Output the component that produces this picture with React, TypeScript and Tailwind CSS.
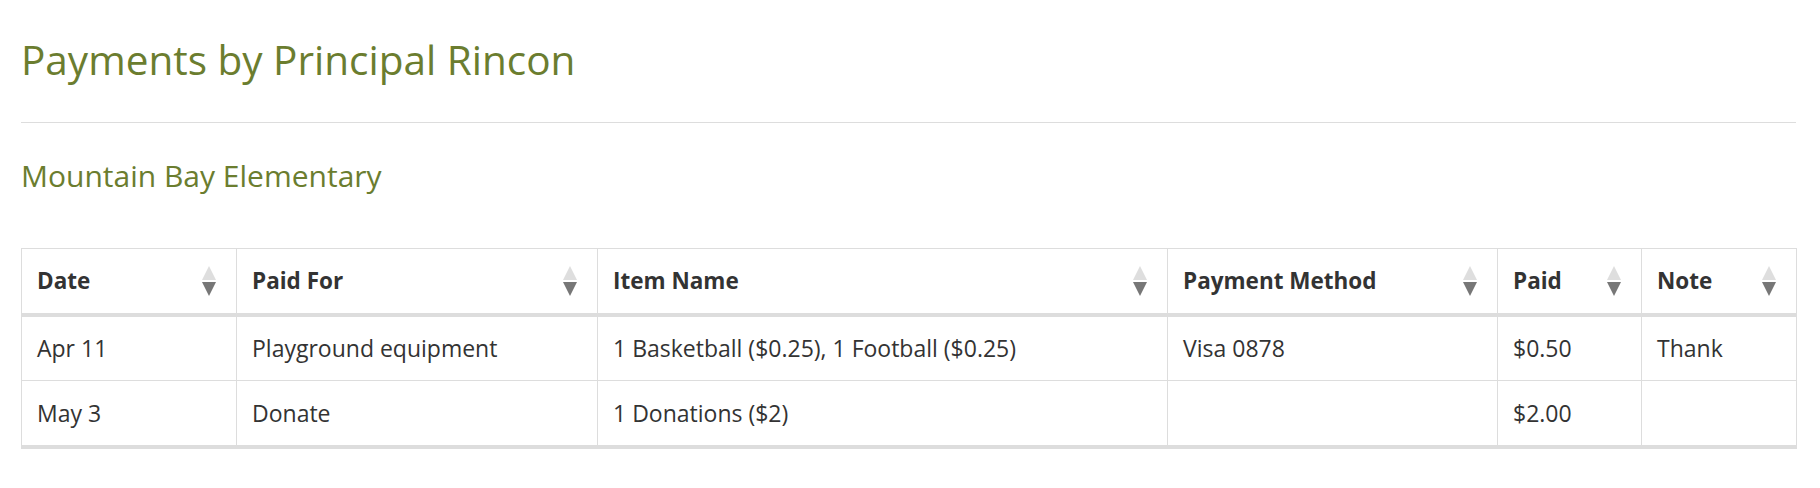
const cols = [
  { label: "Date", width: "w-[215px]" },
  { label: "Paid For", width: "w-[361px]" },
  { label: "Item Name", width: "w-[570px]" },
  { label: "Payment Method", width: "w-[330px]" },
  { label: "Paid", width: "w-[144px]" },
  { label: "Note", width: "w-[155px]" },
];

const rows = [
  ["Apr 11", "Playground equipment", "1 Basketball ($0.25), 1 Football ($0.25)", "Visa 0878", "$0.50", "Thank"],
  ["May 3", "Donate", "1 Donations ($2)", "", "$2.00", ""],
];

function SortIcon() {
  return (
    <svg width="14" height="30" viewBox="0 0 14 30" className="shrink-0">
      <polygon points="7,0 14,14 0,14" fill="#dedede" />
      <polygon points="0,16 14,16 7,30" fill="#777777" />
    </svg>
  );
}

export default function App() {
  return (
    <div className="min-h-[488px] bg-white font-['Open_Sans',sans-serif] text-[#333]">
      <div className="ml-[21px] mr-[24px] pt-[36px]">
        <h1 className="text-[40.5px] leading-[48px] text-[#6b7d2f]">Payments by Principal Rincon</h1>
        <div className="mt-[38px] border-t border-[#dddddd]" />
        <h2 className="mt-[36px] text-[30px] leading-[34px] text-[#6b7d2f]">Mountain Bay Elementary</h2>

        <table className="mt-[55px] w-full table-fixed border-collapse border border-[#dddddd] border-b-[4px]">
          <thead>
            <tr>
              {cols.map((c) => (
                <th
                  key={c.label}
                  className={`${c.width} h-[66px] border border-b-[4px] border-[#dddddd] px-[15px] text-left align-middle text-[22.5px] font-bold`}
                >
                  <div className="flex items-center justify-between pr-[5px]">
                    <span>{c.label}</span>
                    <SortIcon />
                  </div>
                </th>
              ))}
            </tr>
          </thead>
          <tbody>
            {rows.map((r, i) => (
              <tr key={i}>
                {r.map((cell, j) => (
                  <td
                    key={j}
                    className="h-[66px] border border-[#dddddd] px-[15px] align-middle text-[23px]"
                  >
                    {cell}
                  </td>
                ))}
              </tr>
            ))}
          </tbody>
        </table>
      </div>
    </div>
  );
}
